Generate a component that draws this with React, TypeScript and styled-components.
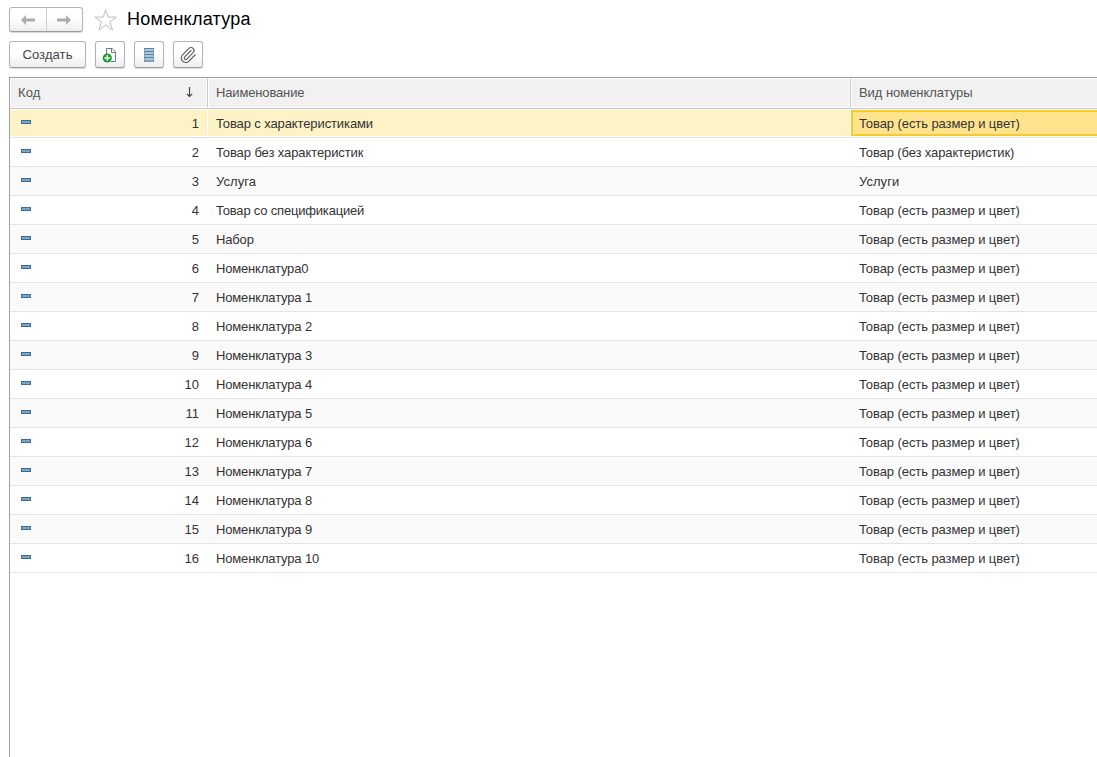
import React from "react";
import styled, { createGlobalStyle, css } from "styled-components";
import { Paperclip } from "lucide-react";

const GlobalStyle = createGlobalStyle`
  html, body, #root { height: 100%; }
  body {
    margin: 0;
    overflow: hidden;
    background: #fff;
    color: #333;
    font: 13px/16px "Liberation Sans", Arial, sans-serif;
  }
`;

const Page = styled.div`
  box-sizing: border-box;
  height: 100vh;
  padding: 7px 0 0 9px;
  display: flex;
  flex-direction: column;
`;

const TitleBar = styled.header`
  display: flex;
  align-items: center;
  height: 25px;
`;

const buttonFace = css`
  box-sizing: border-box;
  border: 1px solid #b4b4b4;
  border-bottom-color: #9c9c9c;
  border-radius: 3px;
  background: linear-gradient(#fff 0%, #fff 45%, #ededed 100%);
  box-shadow: 0 1px 1px rgba(0, 0, 0, 0.16);
`;

const History = styled.nav`
  ${buttonFace}
  display: flex;
  width: 74px;
  height: 25px;
`;

const HistoryButton = styled.button`
  flex: 1;
  display: flex;
  align-items: center;
  justify-content: center;
  padding: 0;
  border: 0;
  background: none;
  & + & { border-left: 1px solid #cfcfcf; }
`;

const Favourite = styled.span`
  display: flex;
  margin-left: 11px;
`;

const Title = styled.h1`
  margin: 0 0 0 9px;
  color: #000;
  font-size: 18px;
  line-height: 25px;
  font-weight: 400;
  letter-spacing: 0.25px;
`;

const Toolbar = styled.div`
  display: flex;
  gap: 9px;
  margin: 9px 0;
`;

const ToolButton = styled.button<{ $width: number }>`
  ${buttonFace}
  display: flex;
  align-items: center;
  justify-content: center;
  width: ${(p) => p.$width}px;
  height: 27px;
  padding: 0;
  color: #444;
  font: inherit;
  letter-spacing: 0.1px;
`;

const Table = styled.div`
  flex: 1;
  border-top: 1px solid #a0a0a0;
  border-left: 1px solid #a0a0a0;
`;

const columns = css`
  display: grid;
  grid-template-columns: 197px 643px 1fr;
`;

const HeaderRow = styled.div`
  ${columns}
  height: 30px;
  border-bottom: 1px solid #c6c6c6;
`;

const HeaderCell = styled.div<{ $spacing: number }>`
  box-sizing: border-box;
  display: flex;
  justify-content: space-between;
  align-items: center;
  padding: 0 13px 1px 7px;
  border: 1px solid #fff;
  background: #f1f1f1;
  color: #545454;
  letter-spacing: ${(p) => p.$spacing}px;
  & + & {
    padding-left: 8px;
    border-left-color: #c6c6c6;
    box-shadow: inset 1px 0 #fff;
  }
  &:last-child { border-right: 0; }
`;

const Row = styled.div<{ $selected: boolean; $striped: boolean }>`
  ${columns}
  box-sizing: border-box;
  height: 29px;
  padding: 1px 0;
  border-bottom: 1px solid #e3e3e3;
  background: ${(p) => (p.$striped ? "#fafafa" : "#fff")};
  ${(p) => p.$selected && css`
    background: #fff;
    & > * { background: #fef2c7; }
    & > * + * { box-shadow: inset 1px 0 #fff; }
  `}
`;

const CodeCell = styled.div`
  display: flex;
  justify-content: space-between;
  padding: 6px 8px 0 11px;
`;

const ItemMark = styled.i`
  box-sizing: border-box;
  width: 10px;
  height: 4px;
  margin-top: 4px;
  border: 1px solid #426b8d;
  background: #70a6cb;
`;

const TextCell = styled.div<{ $spacing: number; $current?: boolean }>`
  padding: 6px 0 0 9px;
  white-space: nowrap;
  letter-spacing: ${(p) => p.$spacing}px;
  ${(p) => p.$current && css`
    && {
      box-sizing: border-box;
      margin-left: 1px;
      padding: 4px 0 0 6px;
      border: 2px solid #f9c927;
      border-right: 0;
      background: #ffe48d;
      box-shadow: none;
    }
  `}
`;

const Arrow = ({ back = false }: { back?: boolean }) => (
  <svg width="14" height="10" viewBox="0 0 14 10">
    <path
      d={back ? "M0 5 5 0V3.5H14V6.5H5V10Z" : "M14 5 9 0V3.5H0V6.5H9V10Z"}
      fill="#acacac"
    />
  </svg>
);

const Star = () => (
  <svg width="24" height="24" viewBox="0 0 24 24" fill="#fff" stroke="#b7bec6">
    <path d="M11.7 1.5 14.2 9.1H22.5L15.9 14 18.5 22 11.7 17.1 4.9 22 7.5 14 .9 9.1H9.2Z" />
  </svg>
);

const NewDocument = () => (
  <svg width="16" height="16" viewBox="0 0 16 16" fill="none">
    <path d="M4.5 8V1.5H10.3L13.5 4.7V14.5H9" fill="#fff" stroke="#667c92" />
    <path d="M9.5 1.5V5.5H13.5" stroke="#667c92" />
    <circle cx="5.3" cy="11" r="4.6" fill="#209b36" />
    <path d="M5.3 8.2V13.8M2.5 11H8.1" stroke="#fff" strokeWidth="1.4" />
  </svg>
);

const ListIcon = () => (
  <svg width="12" height="16" viewBox="0 0 12 16">
    <path d="M1 1H11V15H1Z" fill="#a8c8dd" />
    <path d="M1 1.5H11M1 4.5H11M1 7.5H11M1 10.5H11M1 14H11" stroke="#587f9c" />
    <path d="M1.5 1V15M10.5 1V15" stroke="#7699b0" strokeWidth=".8" />
  </svg>
);

const SortArrow = () => (
  <svg width="7" height="11" viewBox="0 0 7 11" fill="none" stroke="#444" strokeWidth="1.2">
    <path d="M3.5 0V9.5M.8 6.8 3.5 9.5 6.2 6.8" />
  </svg>
);

const SIZED = "Товар (есть размер и цвет)";

const items: { name: string; kind: string; spacing: number; kindSpacing?: number }[] = [
  { name: "Товар с характеристиками", kind: SIZED, spacing: -0.11 },
  { name: "Товар без характеристик", kind: "Товар (без характеристик)", spacing: -0.1, kindSpacing: -0.12 },
  { name: "Услуга", kind: "Услуги", spacing: 0.08, kindSpacing: 0.05 },
  { name: "Товар со спецификацией", kind: SIZED, spacing: -0.19 },
  { name: "Набор", kind: SIZED, spacing: -0.15 },
  { name: "Номенклатура0", kind: SIZED, spacing: -0.17 },
  ...Array.from({ length: 10 }, (_, i) => ({
    name: `Номенклатура ${i + 1}`,
    kind: SIZED,
    spacing: -0.15,
  })),
];

export default function App() {
  return (
    <Page>
      <GlobalStyle />
      <TitleBar>
        <History>
          <HistoryButton aria-label="Назад"><Arrow back /></HistoryButton>
          <HistoryButton aria-label="Вперед"><Arrow /></HistoryButton>
        </History>
        <Favourite><Star /></Favourite>
        <Title>Номенклатура</Title>
      </TitleBar>
      <Toolbar>
        <ToolButton $width={77}>Создать</ToolButton>
        <ToolButton $width={30} aria-label="Скопировать"><NewDocument /></ToolButton>
        <ToolButton $width={30} aria-label="Список"><ListIcon /></ToolButton>
        <ToolButton $width={30} aria-label="Файлы">
          <Paperclip size={18} strokeWidth={1.5} color="#5c5c5c" />
        </ToolButton>
      </Toolbar>
      <Table>
        <HeaderRow>
          <HeaderCell $spacing={0.1}>Код<SortArrow /></HeaderCell>
          <HeaderCell $spacing={-0.15}>Наименование</HeaderCell>
          <HeaderCell $spacing={-0.05}>Вид номенклатуры</HeaderCell>
        </HeaderRow>
        {items.map((item, i) => (
          <Row key={item.name} $selected={i === 0} $striped={i % 2 === 0}>
            <CodeCell><ItemMark />{i + 1}</CodeCell>
            <TextCell $spacing={item.spacing}>{item.name}</TextCell>
            <TextCell $spacing={item.kindSpacing ?? -0.08} $current={i === 0}>{item.kind}</TextCell>
          </Row>
        ))}
      </Table>
    </Page>
  );
}
